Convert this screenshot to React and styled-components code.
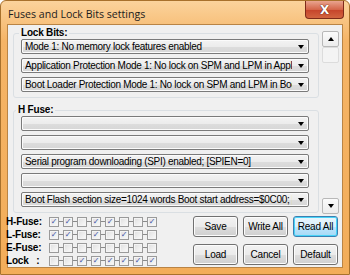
import React from 'react';
import styled, { createGlobalStyle } from 'styled-components';

const GlobalStyle = createGlobalStyle`
  html, body {
    margin: 0;
    padding: 0;
    background: #ffffff;
  }
  body {
    font-family: "Liberation Sans", Arial, sans-serif;
    font-size: 10px;
    letter-spacing: -0.2px;
    color: #000;
  }
`;

export const Window = styled.div`
  width: 350px;
  height: 275px;
  box-sizing: border-box;
  display: flex;
  flex-direction: column;
  background: linear-gradient(#fbd39c, #f5b466 40px, #f2ad5a);
  border: 1px solid #a8712c;
  border-radius: 6px 6px 0 0;
  padding: 0 6px 6px 6px;
`;

export const TitleBar = styled.div`
  height: 23px;
  display: flex;
  align-items: center;
  justify-content: space-between;
  flex-shrink: 0;
`;

export const Title = styled.div`
  font-family: "Open Sans", "Liberation Sans", sans-serif;
  font-size: 10.6px;
  letter-spacing: 0;
  color: #1c1c1c;
  padding-left: 1px;
  margin-top: 2px;
`;

export const CloseButton = styled.div`
  align-self: flex-start;
  width: 39px;
  height: 18px;
  margin-right: -1px;
  box-sizing: border-box;
  border: 1px solid #7d2a1a;
  border-top: none;
  border-radius: 0 0 4px 4px;
  background: linear-gradient(#e9a48f, #d4664a 50%, #c5432a 51%, #d2643f);
  display: flex;
  align-items: center;
  justify-content: center;
  color: #fff;
  font-family: "DejaVu Sans", sans-serif;
  font-weight: bold;
  font-size: 12px;
  text-shadow: 0 0 1px #5a1a10, 0 0 1px #5a1a10;
`;

export const Client = styled.div`
  flex: 1;
  display: flex;
  flex-direction: column;
  background: #f0f0f0;
  border: 1px solid #b98445;
  min-height: 0;
`;

export const ScrollArea = styled.div`
  height: 187px;
  display: flex;
  padding: 2px 3px 0 5px;
  gap: 3px;
  flex-shrink: 0;
`;

export const ScrollContent = styled.div`
  flex: 1;
  overflow: hidden;
  display: flex;
  flex-direction: column;
  gap: 6px;
`;

export const Group = styled.fieldset`
  margin: 0;
  border: 1px solid #dadfe3;
  border-radius: 3px;
  padding: 0 9px 5px 7px;
  display: flex;
  flex-direction: column;
  gap: 4px;
  min-width: 0;
  flex-shrink: 0;
`;

export const Legend = styled.legend`
  font-weight: bold;
  font-size: 10px;
  line-height: 12px;
  padding: 0 2px;
  margin-left: ${({ shift }) => shift}px;
  margin-bottom: 0;
`;

export const Combo = styled.div`
  height: 15px;
  box-sizing: border-box;
  border: 1px solid #7a7a7a;
  border-radius: 2px;
  background: linear-gradient(#f3f3f3, #ececec 50%, #dddddd 51%, #d6d6d6);
  display: flex;
  align-items: center;
  padding: 0 4px 0 3px;
  box-shadow: inset 0 0 0 1px #fbfbfb;
`;

export const ComboText = styled.span`
  flex: 1;
  white-space: nowrap;
  overflow: hidden;
  line-height: 13px;
  letter-spacing: -0.3px;
`;

export const Arrow = styled.span`
  width: 0;
  height: 0;
  border-left: 3.5px solid transparent;
  border-right: 3.5px solid transparent;
  border-top: 4px solid #000;
  margin-left: ${({ gap }) => gap ?? 6}px;
`;

export const ScrollBar = styled.div`
  width: 17px;
  margin-top: 4px;
  display: flex;
  flex-direction: column;
  flex-shrink: 0;
`;

export const ScrollButton = styled.div`
  height: 16px;
  box-sizing: border-box;
  border: 1px solid ${({ light }) => (light ? '#dcdcdc' : '#b8b8b8')};
  background: ${({ light }) => (light ? '#f4f4f4' : 'linear-gradient(#fbfbfb, #ececec)')};
  display: flex;
  align-items: center;
  justify-content: center;
  border-radius: 2px;
`;

export const UpArrow = styled.span`
  width: 0;
  height: 0;
  border-left: 3.5px solid transparent;
  border-right: 3.5px solid transparent;
  border-bottom: 4px solid #000;
`;

export const Track = styled.div`
  flex: 1;
`;

export const Bottom = styled.div`
  flex: 1;
  display: flex;
  justify-content: space-between;
  padding: 0 4px 0 0;
`;

export const FuseGrid = styled.div`
  display: flex;
  flex-direction: column;
  padding-top: 1px;
`;

export const FuseRow = styled.div`
  height: 13px;
  display: flex;
  align-items: center;
`;

export const FuseLabel = styled.div`
  width: 43px;
  font-weight: bold;
  font-size: 10px;
  white-space: pre;
  margin-left: -2px;
`;

export const Connector = styled.span`
  width: 4px;
  height: 1px;
  background: #8a8a8a;
`;

export const Check = styled.span`
  width: 10px;
  height: 10px;
  box-sizing: border-box;
  border: 1px solid #9a9a9a;
  background: linear-gradient(135deg, #dedede, #fbfbfb);
  box-shadow: inset 0 0 0 1px #f4f4f4;
  display: flex;
  align-items: center;
  justify-content: center;
  color: #3b55a8;
  font-family: "DejaVu Sans", sans-serif;
  font-size: 8px;
  line-height: 8px;
`;

export const Buttons = styled.div`
  display: grid;
  grid-template-columns: repeat(3, 45px);
  grid-auto-rows: 21px;
  column-gap: 5px;
  row-gap: 7px;
  padding-top: 2px;
`;

export const Button = styled.div`
  box-sizing: border-box;
  border: 1px solid ${({ focused }) => (focused ? '#3c7fb1' : '#707070')};
  border-radius: 3px;
  background: ${({ focused }) =>
    focused
      ? 'linear-gradient(#eaf6fd, #d9f0fc 50%, #bee6fd 51%, #a7d9f5)'
      : 'linear-gradient(#f2f2f2, #ebebeb 50%, #dddddd 51%, #cfcfcf)'};
  box-shadow: inset 0 0 0 1px ${({ focused }) => (focused ? '#48d4f8' : '#fcfcfc')};
  display: flex;
  align-items: center;
  justify-content: center;
  white-space: nowrap;
  font-size: 10px;
  color: #000;
`;

const lockCombos = [
  'Mode 1: No memory lock features enabled',
  'Application Protection Mode 1: No lock on SPM and LPM in Application Section',
  'Boot Loader Protection Mode 1: No lock on SPM and LPM in Boot Loader Section',
];

const hFuseCombos = [
  '',
  '',
  'Serial program downloading (SPI) enabled; [SPIEN=0]',
  '',
  'Boot Flash section size=1024 words Boot start address=$0C00; [BOOTSZ=00]',
];

const fuseRows = [
  { label: 'H-Fuse:', bits: [1, 1, 0, 1, 1, 0, 0, 1] },
  { label: 'L-Fuse:', bits: [1, 1, 0, 1, 0, 1, 0, 0] },
  { label: 'E-Fuse:', bits: [0, 0, 0, 0, 0, 0, 0, 0] },
  { label: 'Lock   :', bits: [0, 0, 1, 1, 1, 1, 1, 1] },
];

const ComboBox = ({ text }) => (
  <Combo>
    <ComboText>{text}</ComboText>
    <Arrow />
  </Combo>
);

export default function App() {
  return (
    <>
      <GlobalStyle />
      <Window>
        <TitleBar>
          <Title>Fuses and Lock Bits settings</Title>
          <CloseButton>X</CloseButton>
        </TitleBar>
        <Client>
          <ScrollArea>
            <ScrollContent>
              <Group>
                <Legend shift={-2}>Lock Bits:</Legend>
                {lockCombos.map((t, i) => (
                  <ComboBox key={i} text={t} />
                ))}
              </Group>
              <Group>
                <Legend shift={-5}>H Fuse:</Legend>
                {hFuseCombos.map((t, i) => (
                  <ComboBox key={i} text={t} />
                ))}
              </Group>
            </ScrollContent>
            <ScrollBar>
              <ScrollButton>
                <UpArrow />
              </ScrollButton>
              <ScrollButton light />
              <Track />
              <ScrollButton>
                <Arrow gap={0} />
              </ScrollButton>
            </ScrollBar>
          </ScrollArea>
          <Bottom>
            <FuseGrid>
              {fuseRows.map((row) => (
                <FuseRow key={row.label}>
                  <FuseLabel>{row.label}</FuseLabel>
                  {row.bits.map((b, i) => (
                    <React.Fragment key={i}>
                      {i > 0 && <Connector />}
                      <Check>{b ? '✓' : ''}</Check>
                    </React.Fragment>
                  ))}
                </FuseRow>
              ))}
            </FuseGrid>
            <Buttons>
              <Button>Save</Button>
              <Button>Write All</Button>
              <Button focused>Read All</Button>
              <Button>Load</Button>
              <Button>Cancel</Button>
              <Button>Default</Button>
            </Buttons>
          </Bottom>
        </Client>
      </Window>
    </>
  );
}
